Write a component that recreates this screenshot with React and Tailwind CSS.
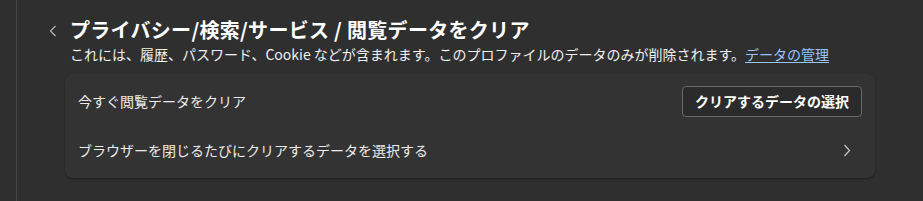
import React from 'react';

const font = { fontFamily: '"Noto Sans CJK JP", "Noto Sans", sans-serif' };

function ChevronLeft() {
  return (
    <svg width="8" height="12" viewBox="0 0 8 12" fill="none">
      <path d="M6.5 1 L1.5 6 L6.5 11" stroke="#bdbdbd" strokeWidth="1.1" />
    </svg>
  );
}

function ChevronRight() {
  return (
    <svg width="8" height="13" viewBox="0 0 8 13" fill="none">
      <path d="M1.5 1 L6.5 6.5 L1.5 12" stroke="#c8c8c8" strokeWidth="1.2" />
    </svg>
  );
}

export default function App() {
  return (
    <div className="flex h-[201px] w-full bg-[#2f2f2f] text-white" style={font}>
      <div className="w-[16px] shrink-0" />
      <div className="flex-1 border-l border-[#464646]">
        <div className="flex items-start pt-[16px]">
          <button className="ml-[30px] mt-[9px] flex h-[12px] w-[12px] items-center justify-center">
            <ChevronLeft />
          </button>
          <div className="ml-[11px]">
            <h1 className="text-[20px] font-bold leading-[28px] tracking-[0.3px] text-white">
              プライバシー/検索/サービス&nbsp;/&nbsp;閲覧データをクリア
            </h1>
            <p className="text-[14px] leading-[20px] text-[#f0f0f0]">
              これには、履歴、パスワード、Cookie などが含まれます。このプロファイルのデータのみが削除されます。
              <a href="#" className="text-[#99c4ff] underline underline-offset-2">データの管理</a>
            </p>
          </div>
        </div>

        <div className="ml-[48px] mt-[10px] w-[810px] rounded-[8px] bg-[#333333] py-[3px] shadow-[0_1px_2px_rgba(0,0,0,0.35)]">
          <div className="flex h-[49px] items-center justify-between pl-[13px] pr-[13px]">
            <span className="text-[14px] text-[#ececec]">今すぐ閲覧データをクリア</span>
            <button className="h-[31px] rounded-[4px] border border-[#6a6a6a] bg-[#2b2b2b] px-[12px] text-[14px] font-bold text-white">
              クリアするデータの選択
            </button>
          </div>
          <div className="flex h-[49px] items-center justify-between pl-[13px] pr-[24px]">
            <span className="text-[14px] text-[#ececec]">ブラウザーを閉じるたびにクリアするデータを選択する</span>
            <ChevronRight />
          </div>
        </div>
      </div>
    </div>
  );
}
